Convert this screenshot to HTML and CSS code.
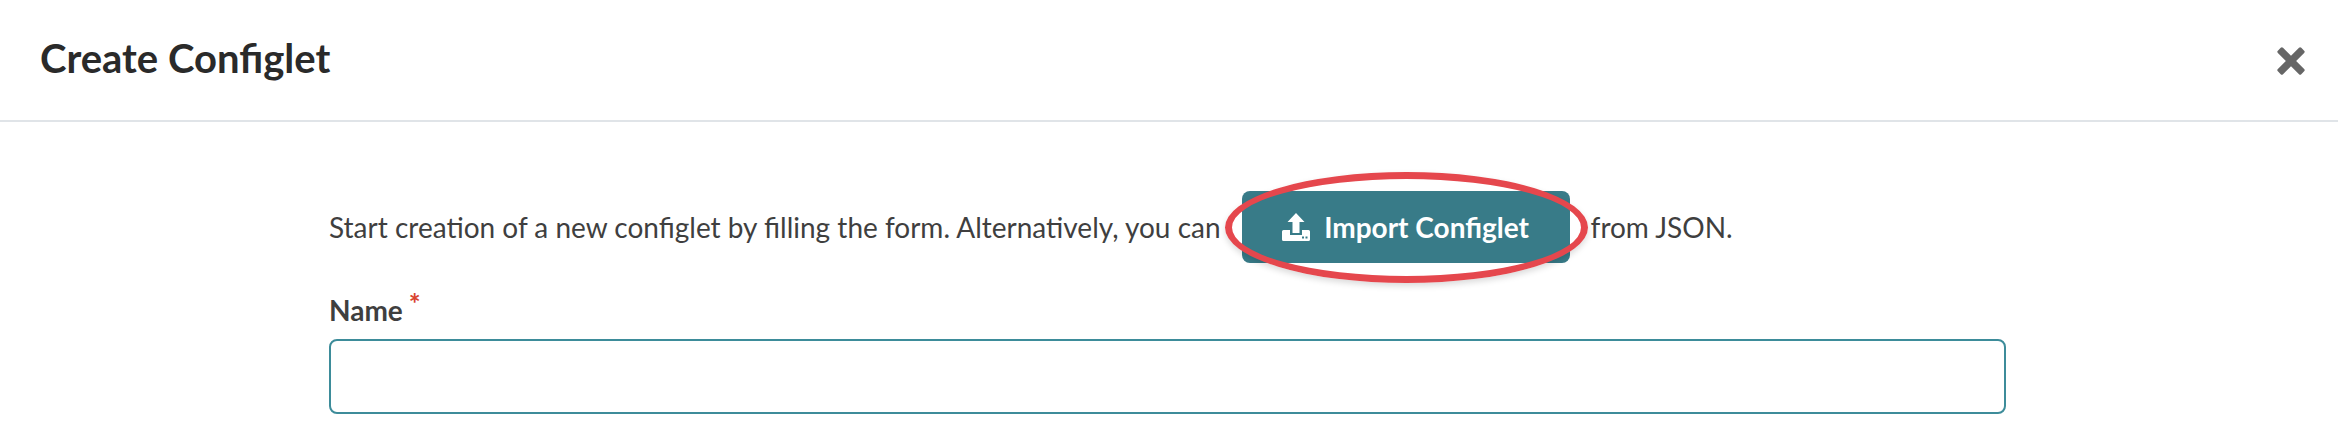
FILE: index.html
```html
<!DOCTYPE html>
<html lang="en">
<head>
    <meta charset="UTF-8">
    <title>Create Configlet</title>
    <link rel="stylesheet" href="styles.css">
</head>
<body>
    <div class="header">
        <h1>Create Configlet</h1>
        <svg class="close" viewBox="0 0 28 28" aria-label="Close">
            <path d="M7 2.500 14 9.500 21 2.500Q22 1.500 23 2.500L25.500 5Q26.500 6 25.500 7L18.500 14 25.500 21Q26.500 22 25.500 23L23 25.500Q22 26.500 21 25.500L14 18.500 7 25.500Q6 26.500 5 25.500L2.500 23Q1.500 22 2.500 21L9.500 14 2.500 7Q1.500 6 2.500 5L5 2.500Q6 1.500 7 2.500Z"/>
        </svg>
    </div>
    <div class="content">
        <div class="intro">
            <span>Start creation of a new configlet by filling the form. Alternatively, you can</span>
            <span class="import-wrap">
                <button class="btn-import">
                    <svg class="upload" viewBox="0 0 28 28">
                        <path d="M14 0 22.500 9H17.500V20H10.500V9H5.500Z"/>
                        <path fill-rule="evenodd" d="M1.500 17H8V22H20V17H26.500Q28 17 28 18.500V26.500Q28 28 26.500 28H1.500Q0 28 0 26.500V18.500Q0 17 1.500 17ZM20 23.500V25.500H22V23.500ZM23.500 23.500V25.500H25.500V23.500Z"/>
                    </svg>
                    Import Configlet
                </button>
                <span class="ring"></span>
            </span>
            <span>from JSON.</span>
        </div>
        <label class="field-label">Name<span class="required">*</span></label>
        <input class="field-input" type="text">
    </div>
</body>
</html>
```

FILE: styles.css
```css
* {
    margin: 0;
    padding: 0;
    box-sizing: border-box;
}

body {
    font-family: Lato, "Noto Sans", sans-serif;
    background: #fff;
    color: #3f3f3f;
    overflow: hidden;
}

.header {
    height: 122px;
    display: flex;
    align-items: center;
    justify-content: space-between;
    padding: 0 31px 4px 40px;
    border-bottom: 2px solid #e0e4e8;
}

h1 {
    font-size: 40px;
    font-weight: 700;
    color: #2a2a2a;
}

.close {
    width: 32px;
    height: 32px;
    margin-top: 6px;
    fill: #666;
}

.content {
    padding: 69px 332px 0 329px;
}

.intro {
    display: flex;
    align-items: center;
    font-size: 28px;
    height: 72px;
}

.import-wrap {
    position: relative;
    margin: 0 21px 0 21px;
}

.btn-import {
    width: 328px;
    height: 72px;
    display: flex;
    align-items: center;
    justify-content: center;
    gap: 14px;
    border: none;
    border-radius: 8px;
    background: #387b88;
    color: #fff;
    font-family: inherit;
    font-size: 28px;
    font-weight: 700;
}

.upload {
    width: 28px;
    height: 28px;
    fill: #fff;
}

/* red annotation drawn over the button */
.ring {
    position: absolute;
    left: -17px;
    top: -19px;
    width: 363px;
    height: 111px;
    border: 7px solid #e5474d;
    border-radius: 50%;
    box-shadow: 0 3px 6px rgba(0, 0, 0, 0.15);
}

.field-label {
    display: block;
    margin-top: 30px;
    font-size: 28px;
    font-weight: 700;
    line-height: 34px;
}

.required {
    color: #d9442f;
    font-size: 28px;
    margin-left: 6px;
    vertical-align: 7px;
    line-height: 0;
}

.field-input {
    display: block;
    width: 100%;
    height: 75px;
    margin-top: 12px;
    border: 2px solid #3d8c9a;
    border-radius: 8px;
    background: #fff;
}
```
